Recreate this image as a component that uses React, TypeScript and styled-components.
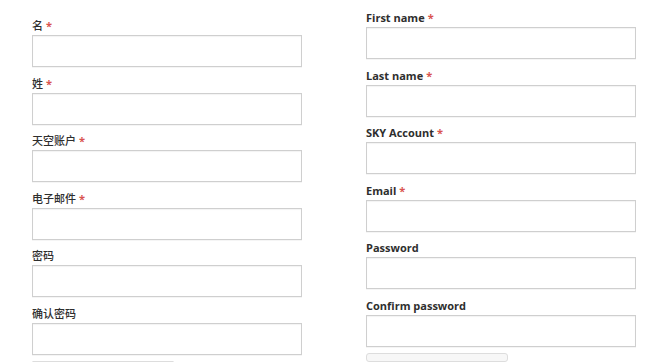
import React from 'react';
import styled, {createGlobalStyle} from "styled-components";

const zhFields = [
    {label: "名", required: true},
    {label: "姓", required: true},
    {label: "天空账户", required: true},
    {label: "电子邮件", required: true},
    {label: "密码", required: false},
    {label: "确认密码", required: false},
]

const enFields = [
    {label: "First name", required: true},
    {label: "Last name", required: true},
    {label: "SKY Account", required: true},
    {label: "Email", required: true},
    {label: "Password", required: false},
    {label: "Confirm password", required: false},
]

function App() {
    return (
        <>
            <GlobalStyle/>
            <Page>
                <Column offset={15}>
                    {zhFields.map(f => (
                        <Field key={f.label}>
                            <Label lang={"zh"}>
                                {f.label}
                                {f.required && <Required>*</Required>}
                            </Label>
                            <Input type={f.label.includes("密码") ? "password" : "text"}/>
                        </Field>
                    ))}
                    <SubmitBox/>
                </Column>
                <Column offset={7}>
                    {enFields.map(f => (
                        <Field key={f.label}>
                            <Label lang={"en"}>
                                {f.label}
                                {f.required && <Required>*</Required>}
                            </Label>
                            <Input type={f.label.includes("assword") ? "password" : "text"}/>
                        </Field>
                    ))}
                    <SubmitBox/>
                </Column>
            </Page>
        </>
    );
}

export default App;

const GlobalStyle = createGlobalStyle`
  html, body {
    margin: 0;
    padding: 0;
    background: #fff;
    overflow: hidden;
  }
  body {
    font-family: "Open Sans", "Noto Sans CJK SC", sans-serif;
  }
`

const Page = styled.div`
  display: flex;
  gap: 64px;
  padding-left: 32px;
  width: 658px;
  height: 362px;
  box-sizing: border-box;
`

const Column = styled.div<{ offset: number }>`
  display: flex;
  flex-direction: column;
  width: 270px;
  padding-top: ${props => props.offset}px;
`

const Field = styled.div`
  display: flex;
  flex-direction: column;
  margin-bottom: 5.6px;
`

const Label = styled.label<{ lang: "zh" | "en" }>`
  display: block;
  height: 20px;
  line-height: 21px;
  font-size: 11px;
  color: #2e2e2e;
  font-weight: ${props => props.lang === "en" ? 700 : 500};
  font-family: ${props => props.lang === "en"
          ? `"Open Sans", "Liberation Sans", sans-serif`
          : `"Noto Sans CJK SC", sans-serif`};
`

const Required = styled.span`
  color: #d9534f;
  margin-left: 3px;
  font-family: "Open Sans", sans-serif;
  font-weight: 700;
`

const Input = styled.input`
  box-sizing: border-box;
  width: 270px;
  height: 32px;
  margin: 0;
  border: 1px solid #cfcfcf;
  border-radius: 0;
  background: #fff;
  box-shadow: inset 0 1px 1px rgba(0, 0, 0, 0.05), 0 1px 0 rgba(0, 0, 0, 0.04);
  outline: none;
`

const SubmitBox = styled.div`
  width: 142px;
  height: 20px;
  box-sizing: border-box;
  border: 1px solid #ddd;
  border-radius: 3px;
  background: #f7f7f7;
`
